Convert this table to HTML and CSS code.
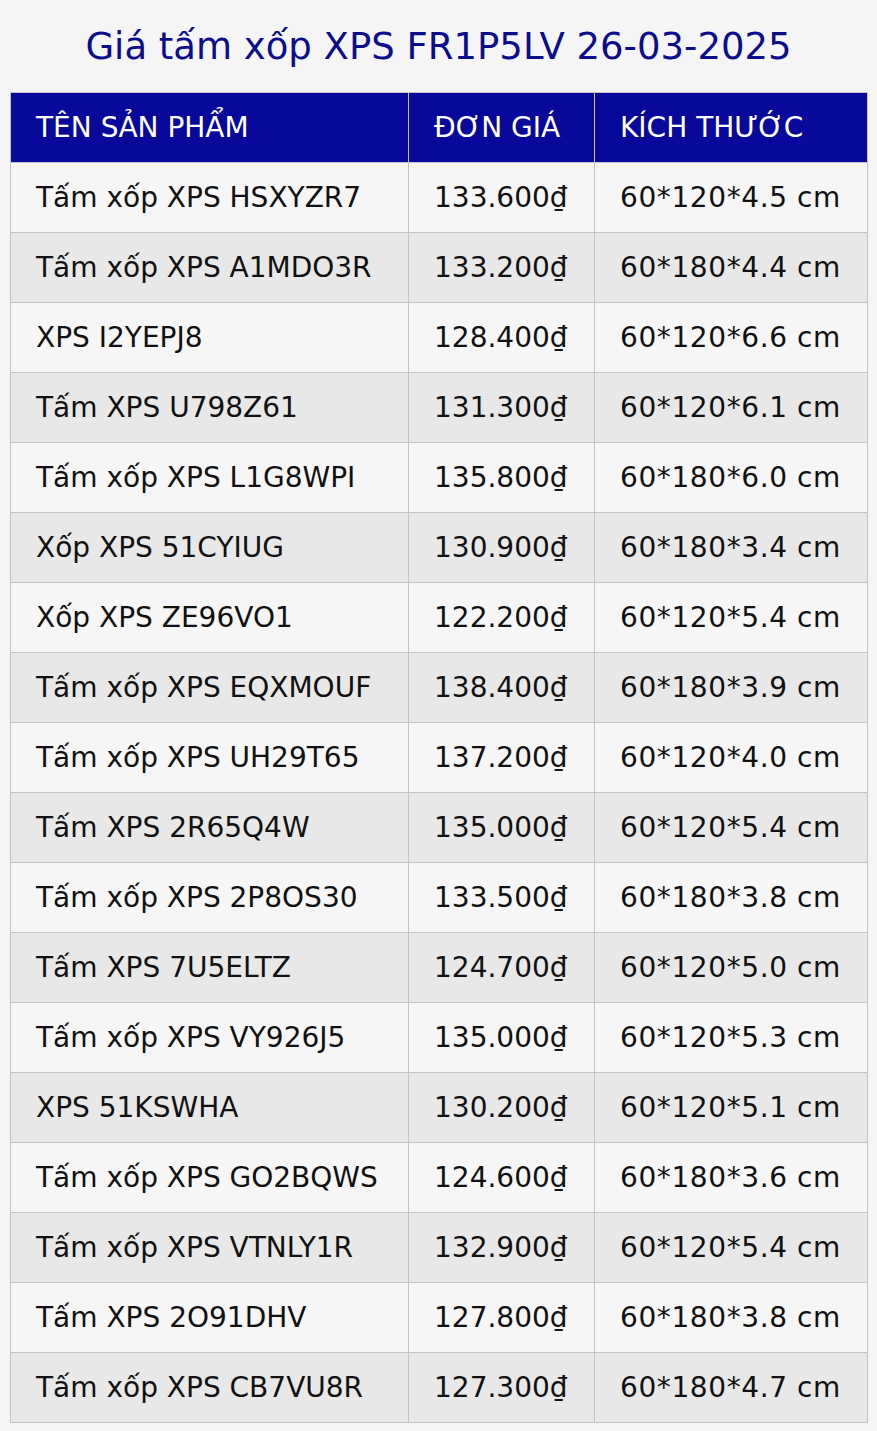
FILE: index.html
```html
<!DOCTYPE html>
<html lang="vi">
<head>
<meta charset="utf-8">
<title>Giá tấm xốp XPS</title>
<link rel="stylesheet" href="styles.css">
</head>
<body>
<h1 class="title">Giá tấm xốp XPS FR1P5LV 26-03-2025</h1>
<table class="price-table">
<thead>
<tr><th class="c-name">TÊN SẢN PHẨM</th><th class="c-price">ĐƠN GIÁ</th><th class="c-size">KÍCH THƯỚC</th></tr>
</thead>
<tbody>
<tr><td>Tấm xốp XPS HSXYZR7</td><td>133.600₫</td><td class="size">60*120*4.5 cm</td></tr>
<tr><td>Tấm xốp XPS A1MDO3R</td><td>133.200₫</td><td class="size">60*180*4.4 cm</td></tr>
<tr><td>XPS I2YEPJ8</td><td>128.400₫</td><td class="size">60*120*6.6 cm</td></tr>
<tr><td>Tấm XPS U798Z61</td><td>131.300₫</td><td class="size">60*120*6.1 cm</td></tr>
<tr><td>Tấm xốp XPS L1G8WPI</td><td>135.800₫</td><td class="size">60*180*6.0 cm</td></tr>
<tr><td>Xốp XPS 51CYIUG</td><td>130.900₫</td><td class="size">60*180*3.4 cm</td></tr>
<tr><td>Xốp XPS ZE96VO1</td><td>122.200₫</td><td class="size">60*120*5.4 cm</td></tr>
<tr><td>Tấm xốp XPS EQXMOUF</td><td>138.400₫</td><td class="size">60*180*3.9 cm</td></tr>
<tr><td>Tấm xốp XPS UH29T65</td><td>137.200₫</td><td class="size">60*120*4.0 cm</td></tr>
<tr><td>Tấm XPS 2R65Q4W</td><td>135.000₫</td><td class="size">60*120*5.4 cm</td></tr>
<tr><td>Tấm xốp XPS 2P8OS30</td><td>133.500₫</td><td class="size">60*180*3.8 cm</td></tr>
<tr><td>Tấm XPS 7U5ELTZ</td><td>124.700₫</td><td class="size">60*120*5.0 cm</td></tr>
<tr><td>Tấm xốp XPS VY926J5</td><td>135.000₫</td><td class="size">60*120*5.3 cm</td></tr>
<tr><td>XPS 51KSWHA</td><td>130.200₫</td><td class="size">60*120*5.1 cm</td></tr>
<tr><td>Tấm xốp XPS GO2BQWS</td><td>124.600₫</td><td class="size">60*180*3.6 cm</td></tr>
<tr><td>Tấm xốp XPS VTNLY1R</td><td>132.900₫</td><td class="size">60*120*5.4 cm</td></tr>
<tr><td>Tấm XPS 2O91DHV</td><td>127.800₫</td><td class="size">60*180*3.8 cm</td></tr>
<tr><td>Tấm xốp XPS CB7VU8R</td><td>127.300₫</td><td class="size">60*180*4.7 cm</td></tr>
</tbody>
</table>
</body>
</html>
```
FILE: styles.css
```css
html, body {
  margin: 0;
  padding: 0;
  background: #f5f5f5;
}
body {
  padding: 0 10px;
  font-family: "DejaVu Sans", Verdana, sans-serif;
}
.title {
  margin: 0;
  height: 92px;
  line-height: 94px;
  text-align: center;
  font-size: 37px;
  font-weight: normal;
  color: #0c0c8c;
  white-space: nowrap;
}
.price-table {
  width: 857px;
  border-collapse: collapse;
  table-layout: fixed;
  font-size: 28px;
}
.price-table th,
.price-table td {
  height: 70px;
  padding: 0 0 0 25px;
  border: 1px solid #c4c4c4;
  text-align: left;
  font-weight: normal;
  white-space: nowrap;
  box-sizing: border-box;
}
.price-table td.size { letter-spacing: 0.6px; }
.price-table thead th {
  background: #08089a;
  color: #ffffff;
  border-color: #c4c4c4;
}
.c-name { width: 398px; }
.c-price { width: 186px; }
.c-size { width: 273px; }
.price-table tbody tr:nth-child(odd) td { background: #f6f6f6; color: #111; }
.price-table tbody tr:nth-child(even) td { background: #e8e8e8; color: #111; }
```
